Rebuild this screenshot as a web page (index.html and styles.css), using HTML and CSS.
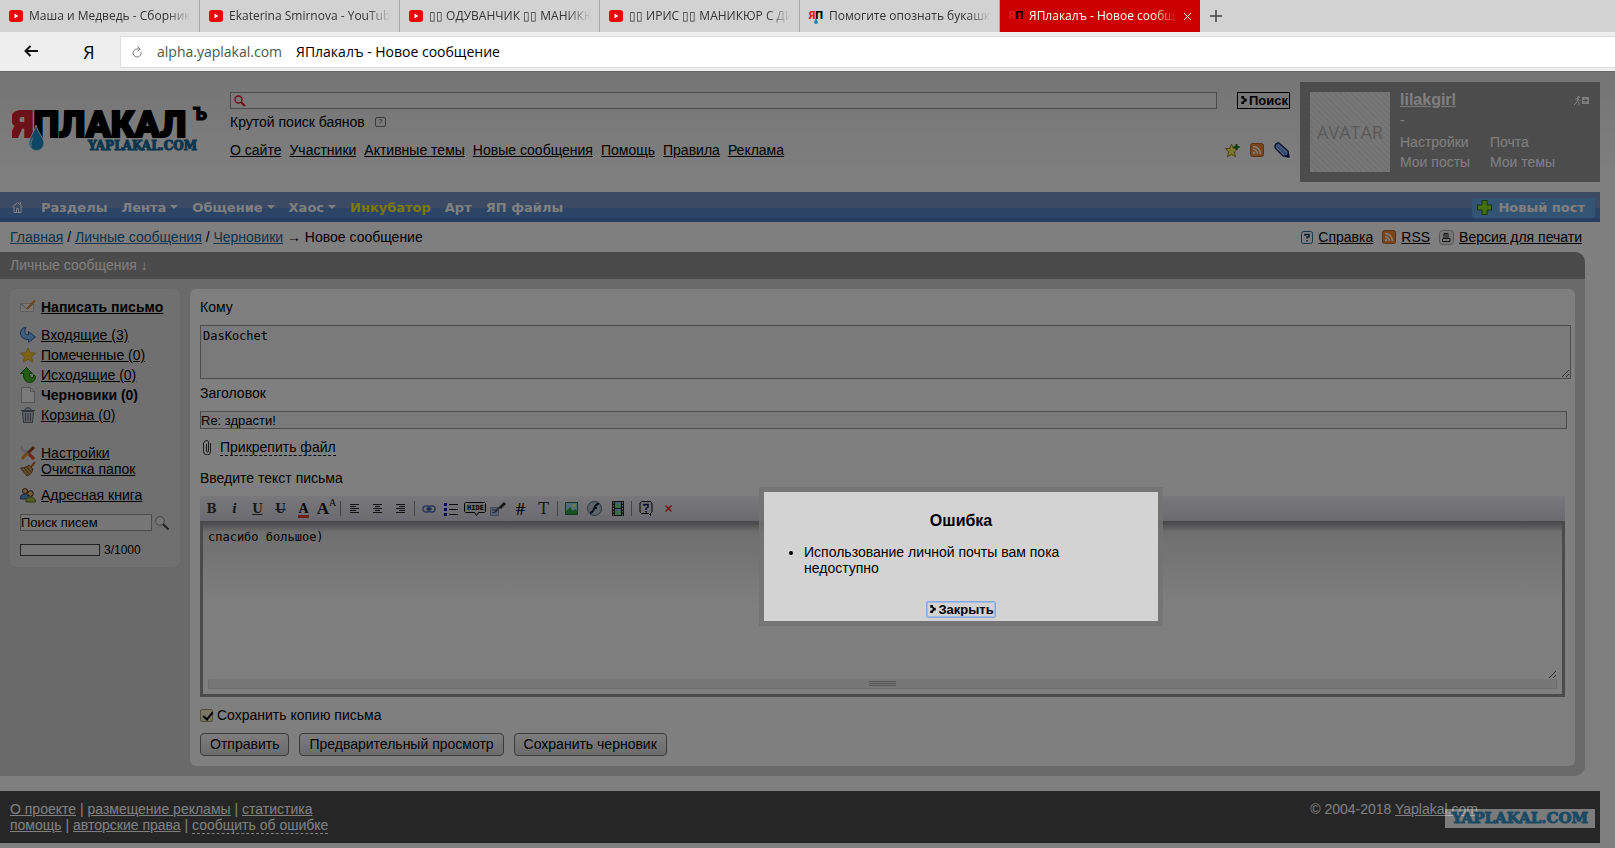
FILE: index.html
```html
<!DOCTYPE html>
<html lang="ru">
<head>
    <meta charset="UTF-8">
    <meta name="viewport" content="width=device-width, initial-scale=1.0">
    <title>ЯПлакалъ - Новое сообщение</title>
    <link rel="stylesheet" href="styles.css">
</head>
<body>
    <svg class="sprite" width="0" height="0" aria-hidden="true">
        <symbol id="rss" viewBox="0 0 14 14">
            <rect x=".5" y=".5" width="13" height="13" rx="2" fill="#f08a3c" stroke="#b86a28"/>
            <circle cx="4" cy="10" r="1.3" fill="#fff"/>
            <path d="M3 6.500a4.500 4.500 0 0 1 4.500 4.500M3 3.500a7.500 7.500 0 0 1 7.500 7.500" fill="none" stroke="#fff" stroke-width="1.500"/>
        </symbol>
        <symbol id="youtube" viewBox="0 0 14 12">
            <rect width="14" height="12" rx="3" fill="#f00000"/>
            <path d="M5.500 3.500v5l4-2.500z" fill="#fff"/>
        </symbol>
        <symbol id="marks" viewBox="0 0 6 10">
            <path d="M0 0h3v3H0zM2 2h2v2H2zM3 3h3v3H3zM2 5h2v2H2zM0 6h3v3H0z" fill="#000"/>
        </symbol>
    </svg>

    <!-- browser -->
    <nav class="tabs">
        <a class="tab" href="#"><svg width="14" height="12"><use href="#youtube"/></svg><span>Маша и Медведь - Сборник</span></a>
        <a class="tab" href="#"><svg width="14" height="12"><use href="#youtube"/></svg><span>Ekaterina Smirnova - YouTube</span></a>
        <a class="tab" href="#"><svg width="14" height="12"><use href="#youtube"/></svg><span>▯▯ ОДУВАНЧИК ▯▯ МАНИКЮР</span></a>
        <a class="tab" href="#"><svg width="14" height="12"><use href="#youtube"/></svg><span>▯▯ ИРИС ▯▯ МАНИКЮР С ДИЗ</span></a>
        <a class="tab" href="#">
            <span class="fav"><b>Я</b>П<svg width="4" height="6" viewBox="0 0 4 6"><path d="M2 0l2 4a2 2 0 0 1-4 0z" fill="#1b87c4"/></svg></span><span>Помогите опознать букашку</span>
        </a>
        <a class="tab active" href="#">
            <span class="fav"><b>Я</b>П</span><span>ЯПлакалъ - Новое сообщение</span>
            <svg class="close" width="9" height="9" viewBox="0 0 9 9"><path d="M1 1l7 7M8 1l-7 7" stroke="#fff"/></svg>
        </a>
        <button class="new-tab" aria-label="Новая вкладка"><svg width="12" height="12" viewBox="0 0 12 12"><path d="M6 0v12M0 6h12" stroke="#444" stroke-width="1.500"/></svg></button>
    </nav>
    <div class="toolbar">
        <button class="back" aria-label="Назад"><svg width="14" height="12" viewBox="0 0 14 12"><path d="M14 6H2M6.500 1L1.500 6l5 5" fill="none" stroke="#111" stroke-width="2"/></svg></button>
        <button class="ya">Я</button>
        <div class="address">
            <svg width="12" height="14" viewBox="0 0 12 14"><path d="M10 7A4 4 0 1 1 6 4h3M6.500 1.500L9 4 6.500 6.500" fill="none" stroke="#777"/></svg>
            <span class="host">alpha.yaplakal.com</span>
            <span>ЯПлакалъ - Новое сообщение</span>
        </div>
    </div>

    <div class="page">
        <header class="header">
            <a class="logo" href="#" aria-label="ЯПлакалъ">
                <svg width="200" height="50" viewBox="0 0 200 50">
                    <text class="logo-main" x="0" y="32"><tspan class="logo-ya">Я</tspan>ПЛАКАЛ</text>
                    <text class="logo-end" x="181" y="15">Ъ</text>
                    <text class="logo-sub" x="76" y="45">YAPLAKAL.COM</text>
                    <path d="M24 20c2 8 8 13 8 18a7.500 7.500 0 0 1-15 0c0-5 5-10 7-18z" fill="#1d8fcc" stroke="#e8e8e8"/>
                    <path d="M21 33c-3 4-3 7-1 9" fill="none" stroke="#7cc8ee" stroke-width="2"/>
                </svg>
            </a>
            <div class="header-main">
                <form class="search">
                    <div class="search-box">
                        <svg width="12" height="12" viewBox="0 0 12 12"><circle cx="4.500" cy="4.500" r="3.500" fill="none" stroke="#e01030" stroke-width="1.300"/><path d="M7 7l4 4" stroke="#e01030" stroke-width="2"/></svg>
                        <input type="text" aria-label="Поиск">
                    </div>
                    <button class="mark-btn" type="button"><svg width="6" height="9"><use href="#marks"/></svg>Поиск</button>
                </form>
                <p class="bayan">Крутой поиск баянов <span class="hint">?</span></p>
                <div class="links-row">
                    <nav class="top-links">
                        <a href="#">О сайте</a>
                        <a href="#">Участники</a>
                        <a href="#">Активные темы</a>
                        <a href="#">Новые сообщения</a>
                        <a href="#">Помощь</a>
                        <a href="#">Правила</a>
                        <a href="#">Реклама</a>
                    </nav>
                    <div class="top-icons">
                        <svg width="15" height="15" viewBox="0 0 15 15"><path d="M6.500 1l1.800 4.200 4.700.4-3.500 3.200 1 5-4-2.500-4 2.500 1-5L.500 5.600l4.500-.4z" fill="#f4ec5a" stroke="#9c8c20"/><path d="M11.500 1v6M8.500 4h6" stroke="#1c7a28" stroke-width="2"/></svg>
                        <svg width="14" height="14"><use href="#rss"/></svg>
                        <svg width="16" height="16" viewBox="0 0 16 16"><path d="M1 4c0-1.500 2-3.500 4-3l9 8 1 6-6-1-8-8z" fill="#6c9ce8" stroke="#101c50" stroke-width="1.300"/><path d="M4 2.500l9 8M2 5l8 8" stroke="#b8d4ff"/><path d="M11 15l4 .500-.500-4.500z" fill="#101c50"/></svg>
                    </div>
                </div>
            </div>
            <div class="user">
                <div class="avatar">AVATAR</div>
                <div class="user-info">
                    <a class="user-name" href="#">lilakgirl</a>
                    <span>-</span>
                    <div class="user-links">
                        <a href="#">Настройки</a>
                        <a href="#">Почта</a>
                        <a href="#">Мои посты</a>
                        <a href="#">Мои темы</a>
                    </div>
                </div>
                <svg class="exit" width="17" height="10" viewBox="0 0 17 10"><circle cx="5.500" cy="1.200" r="1.200" fill="#fff"/><path d="M2 3l3-.5-1 3.500-3 3M4.500 5.500L6 7v2.500M5 3.500l2.500 1" fill="none" stroke="#fff"/><path d="M9 1h7v7H9z" fill="#fff"/><path d="M10 4.500h4M12 2.500l2 2-2 2" fill="none" stroke="#888"/></svg>
            </div>
        </header>

        <nav class="menu">
            <a class="home" href="#" aria-label="Главная"><svg width="11" height="12" viewBox="0 0 11 12"><path d="M.500 6L5.500 1.500l5 4.500M2 5.500v6h7v-6M8.500 3.500V1M4.500 11V7.500h2V11" fill="none" stroke="#fff"/></svg></a>
            <a href="#">Разделы</a>
            <a class="drop" href="#">Лента</a>
            <a class="drop" href="#">Общение</a>
            <a class="drop" href="#">Хаос</a>
            <a class="hot" href="#">Инкубатор</a>
            <a href="#">Арт</a>
            <a href="#">ЯП файлы</a>
            <a class="new-post" href="#"><svg width="15" height="15" viewBox="0 0 15 15"><path d="M5 .500h5V5h4.500v5H10v4.500H5V10H.500V5H5z" fill="#8ce01c" stroke="#2c7010"/></svg>Новый пост</a>
        </nav>

        <div class="crumbs">
            <div>
                <a href="#">Главная</a> / <a href="#">Личные сообщения</a> / <a href="#">Черновики</a> → Новое сообщение
            </div>
            <div class="tools">
                <a href="#"><svg width="12" height="13" viewBox="0 0 12 13"><rect x=".5" y=".5" width="11" height="12" rx="2" fill="#f4f8fc" stroke="#2c6c94"/><path d="M4 5V3.500h4V6H6v1.500M6 9v1.500" fill="none" stroke="#104060" stroke-width="1.500"/></svg><span>Справка</span></a>
                <a href="#"><svg width="14" height="14"><use href="#rss"/></svg><span>RSS</span></a>
                <a href="#"><svg width="15" height="15" viewBox="0 0 15 15"><rect x=".5" y=".5" width="14" height="14" rx="3" fill="#eee" stroke="#aaa"/><path d="M5 8.500v-5h4v5M6 5h2M6 7h2M4 8.500h7v3H3.500v-2z" fill="none" stroke="#222"/></svg><span>Версия для печати</span></a>
            </div>
        </div>

        <main class="box">
            <div class="box-title">Личные сообщения ↓</div>
            <div class="box-body">
                <aside class="side">
                    <ul class="folders">
                        <li class="write"><svg width="16" height="16" viewBox="0 0 16 16"><path d="M.500 4.500h13v8H.500z" fill="#eee" stroke="#bbb"/><path d="M1 5l6 5 6-5" fill="none" stroke="#999"/><path d="M15 1.500L7 10" stroke="#d88c30" stroke-width="2"/></svg><a href="#">Написать письмо</a></li>
                        <li><svg width="16" height="16" viewBox="0 0 16 16"><path d="M6 .500C2 .500.500 3 .500 6c0 4 3 6.500 8 6.500v3l7-5.500-7-5.500V8C5 8 3.500 4 6 .500z" fill="#7cb8f8" stroke="#2c5ca4"/></svg><a href="#">Входящие (3)</a></li>
                        <li><svg width="16" height="16" viewBox="0 0 16 16"><path d="M8 1l2.200 4.700 5.300.5-4 3.600 1.200 5.200L8 12.300 3.300 15l1.200-5.200-4-3.600 5.300-.5z" fill="#f8c82c" stroke="#d09c20"/></svg><a href="#">Помеченные (0)</a></li>
                        <li><svg width="16" height="16" viewBox="0 0 16 16"><path d="M6.500.500l6 6H9.500c0 4 2 5 4 3.500V7.500l2 2c0 4-3 6-6 6s-6-2-6-9h-3z" fill="#44b820" stroke="#186c08"/></svg><a href="#">Исходящие (0)</a></li>
                        <li class="current"><svg width="16" height="16" viewBox="0 0 16 16"><path d="M1.500.500h9l4 4v11h-13z" fill="#f4f4f4" stroke="#aaa"/><path d="M10.500.500v4h4" fill="none" stroke="#aaa"/></svg><span>Черновики (0)</span></li>
                        <li><svg width="16" height="16" viewBox="0 0 16 16"><path d="M2.500 4.500h11l-1 11h-9zM1 3.500h14M5 3c0-3 6-3 6 0" fill="#c0c8d0" stroke="#606c7c"/><path d="M5.500 6v8M8 6v8M10.500 6v8" stroke="#606c7c"/></svg><a href="#">Корзина (0)</a></li>
                    </ul>
                    <ul class="settings">
                        <li><svg width="16" height="16" viewBox="0 0 16 16"><path d="M1.500 1v3l2 2 2-.500L13 14" fill="none" stroke="#bbb" stroke-width="2"/><path d="M14 2L8 8" stroke="#904020" stroke-width="3"/><path d="M7 8l-5 6" stroke="#e88828" stroke-width="3"/><path d="M9 9l5 5" stroke="#d84820" stroke-width="3"/></svg><a href="#">Настройки</a></li>
                        <li><svg width="16" height="16" viewBox="0 0 16 16"><path d="M15 1l-4 5" stroke="#c05020" stroke-width="2"/><path d="M9 4l4 4c-1 4-3 6-6 7L.500 7C4 7 7 6 9 4z" fill="#c89850" stroke="#80582c"/><path d="M4 7l5 6M7 6l4 5" stroke="#80582c"/></svg><a href="#">Очистка папок</a></li>
                        <li class="book"><svg width="16" height="16" viewBox="0 0 16 16"><path d="M.500 12c0-4 2-5 4-5s4 1 4 5z" fill="#5c94d0" stroke="#28507c"/><circle cx="5" cy="4" r="2.500" fill="#e8b880" stroke="#503010"/><path d="M6 15c0-4 2-5 4.500-5s5 1 5 5z" fill="#a8bc48" stroke="#586818"/><circle cx="10.500" cy="6.500" r="2.800" fill="#f0c080" stroke="#302010"/></svg><a href="#">Адресная книга</a></li>
                    </ul>
                    <form class="mail-search">
                        <input type="text" value="Поиск писем" aria-label="Поиск писем">
                        <svg width="14" height="14" viewBox="0 0 14 14"><circle cx="5" cy="5" r="4.300" fill="#eee" stroke="#888"/><path d="M8 8l5.500 5.500" stroke="#444" stroke-width="2"/></svg>
                    </form>
                    <div class="quota"><span class="quota-bar"></span>3/1000</div>
                </aside>

                <form class="compose">
                    <label for="to">Кому</label>
                    <textarea id="to" class="to">DasKochet</textarea>
                    <label for="subject">Заголовок</label>
                    <input id="subject" class="subject" type="text" value="Re: здрасти!">
                    <p class="attach"><svg width="9" height="15" viewBox="0 0 9 15"><path d="M3.500 4v7a1 1 0 0 0 2 0V3a2 2 0 0 0-4-1L.500 3v8.500a3 3 0 0 0 7 0V3" fill="none" stroke="#333"/></svg><a href="#">Прикрепить файл</a></p>
                    <label for="text">Введите текст письма</label>
                    <div class="editor-tools">
                        <button type="button" class="bold">B</button>
                        <button type="button" class="italic">i</button>
                        <button type="button" class="under">U</button>
                        <button type="button" class="strike">U</button>
                        <button type="button" class="color">A</button>
                        <button type="button" class="size">A<sup>A</sup></button>
                        <i class="sep"></i>
                        <button type="button" aria-label="Влево"><svg width="9" height="11" viewBox="0 0 9 11"><path d="M0 1.500h9M0 3.500h6M0 5.500h9M0 7.500h6M0 9.500h9" stroke="#222"/></svg></button>
                        <button type="button" aria-label="По центру"><svg width="9" height="11" viewBox="0 0 9 11"><path d="M0 1.500h9M2 3.500h5M0 5.500h9M2 7.500h5M0 9.500h9" stroke="#222"/></svg></button>
                        <button type="button" aria-label="Вправо"><svg width="9" height="11" viewBox="0 0 9 11"><path d="M0 1.500h9M3 3.500h6M0 5.500h9M3 7.500h6M0 9.500h9" stroke="#222"/></svg></button>
                        <i class="sep"></i>
                        <button type="button" aria-label="Ссылка"><svg width="14" height="8" viewBox="0 0 14 8"><rect x="1" y="1" width="7" height="6" rx="3" fill="none" stroke="#5474b8" stroke-width="1.500"/><rect x="6" y="1" width="7" height="6" rx="3" fill="none" stroke="#5474b8" stroke-width="1.500"/><path d="M4 4h6" stroke="#345494" stroke-width="1.500"/></svg></button>
                        <button type="button" aria-label="Список"><svg width="15" height="14" viewBox="0 0 15 14"><path d="M0 1h3v3H0zM0 6h3v3H0zM0 11h3v3H0z" fill="#1010a0"/><path d="M5 2.500h9M5 7.500h9M5 12.500h9" stroke="#111"/></svg></button>
                        <button type="button" class="hide" aria-label="Скрыть"><svg width="22" height="14" viewBox="0 0 22 14"><path d="M1.500.500h19l1 1v8l-1 1h-6l-2 3-2-3h-9l-1-1v-8z" fill="#ddd" stroke="#000"/><text x="3" y="8">HIDE</text></svg></button>
                        <button type="button" aria-label="Правка"><svg width="16" height="14" viewBox="0 0 16 14"><path d="M.500 5.500h8v8h-8z" fill="#b0bcd8" stroke="#8090b8"/><path d="M2 8h4M2 10.500h3" stroke="#4c64a0"/><path d="M15 1l-5 5" stroke="#333" stroke-width="3"/><path d="M10 5l-5 5" stroke="#555" stroke-width="2"/></svg></button>
                        <button type="button" class="sans">#</button>
                        <button type="button" class="serif">T</button>
                        <i class="sep"></i>
                        <button type="button" aria-label="Картинка"><svg width="13" height="13" viewBox="0 0 13 13"><path d="M.500.500h12v12H.500z" fill="#a0dcf4" stroke="#286c40"/><path d="M1 9l4-4 3 4 2-2 2 2v3H1z" fill="#30a040"/><circle cx="9" cy="3.500" r="1.500" fill="#fff480"/></svg></button>
                        <button type="button" aria-label="Флеш"><svg width="15" height="15" viewBox="0 0 15 15"><circle cx="7.500" cy="7.500" r="7" fill="#b8c8d0" stroke="#506878"/><path d="M12 3C8 2.500 8 6 7 8s-2 4-4 4M7 7h3" fill="none" stroke="#101c3c" stroke-width="2"/></svg></button>
                        <button type="button" aria-label="Видео"><svg width="12" height="15" viewBox="0 0 12 15"><path d="M0 0h12v15H0z" fill="#222"/><path d="M3 1h6v6H3zM3 8h6v6H3z" fill="#70d890"/><path d="M3 1h6v2H3zM3 8h6v2H3z" fill="#80c0e8"/><path d="M1.500 1v14M10.500 1v14" stroke="#ccc" stroke-dasharray="1.500 1.500"/></svg></button>
                        <i class="sep"></i>
                        <button type="button" aria-label="Помощь"><svg width="14" height="15" viewBox="0 0 14 15"><path d="M2.500.500h9l1.500 1.500v9l-1.500 1.500v2l-2-2h-7L1 11V2z" fill="#ddd" stroke="#000"/><path d="M5 5V3.500h4V6L7 7.500V9M7 10v1.500" fill="none" stroke="#10106c" stroke-width="1.500"/></svg></button>
                        <button type="button" aria-label="Очистить"><svg width="7" height="7" viewBox="0 0 7 7"><path d="M.500.500l6 6M6.500.500l-6 6" stroke="#e83018" stroke-width="1.500"/></svg></button>
                    </div>
                    <div class="editor">
                        <textarea id="text">спасибо большое)</textarea>
                        <div class="grip"><i></i></div>
                    </div>
                    <div class="keep">
                        <input type="checkbox" id="keep" checked>
                        <label for="keep">Сохранить копию письма</label>
                    </div>
                    <div class="actions">
                        <button type="button">Отправить</button>
                        <button type="button">Предварительный просмотр</button>
                        <button type="button">Сохранить черновик</button>
                    </div>
                </form>
            </div>
        </main>

        <footer class="footer">
            <div>
                <a href="#">О проекте</a> | <a href="#">размещение рекламы</a> | <a href="#">статистика</a><br>
                <a href="#">помощь</a> | <a href="#">авторские права</a> | <a class="dashed" href="#">сообщить об ошибке</a>
            </div>
            <div class="copy">© 2004-2018 <a href="#">Yaplakal.com</a></div>
        </footer>

        <div class="overlay"></div>
        <div class="modal" role="dialog" aria-labelledby="err">
            <h2 id="err">Ошибка</h2>
            <ul>
                <li>Использование личной почты вам пока недоступно</li>
            </ul>
            <button class="mark-btn focused" type="button"><svg width="6" height="9"><use href="#marks"/></svg>Закрыть</button>
        </div>
        <div class="watermark">YAPLAKAL.COM</div>
    </div>
</body>
</html>
```

FILE: styles.css
```css
* { margin: 0; padding: 0; box-sizing: border-box; }
body {
    min-height: 100vh;
    display: flex;
    flex-direction: column;
    font: 14px/16px "Liberation Sans", Arial, sans-serif;
    color: #000;
}
a { color: inherit; }
ul { list-style: none; }
svg { flex: none; }
button { font: inherit; color: inherit; border: 0; background: none; }
input, textarea { color: inherit; }
.sprite { position: absolute; }

/* browser */
.tabs {
    display: flex;
    height: 32px;
    background: #d2d2d2;
    font: 12px/18px "Open Sans", sans-serif;
}
.tab {
    position: relative;
    flex: 0 1 200px;
    min-width: 0;
    display: flex;
    align-items: center;
    gap: 6px;
    padding: 0 8px 0 9px;
    border-right: 1px solid #a8a8a8;
    color: #333;
    text-decoration: none;
    white-space: nowrap;
}
.tab > span:not(.fav) {
    flex: 1;
    overflow: hidden;
    -webkit-mask-image: linear-gradient(to left, transparent, #000 24px);
    mask-image: linear-gradient(to left, transparent, #000 24px);
}
.fav {
    position: relative;
    font: 900 11px/14px Roboto, sans-serif;
    color: #000;
}
.fav b { color: #e01c24; font-weight: 900; }
.fav svg { position: absolute; left: 5px; top: 9px; }
.tab.active { background: #cc0000; color: #fff; border: 0; }
.new-tab { width: 32px; display: flex; align-items: center; justify-content: center; }
.toolbar {
    display: flex;
    align-items: center;
    height: 40px;
    background: #eee;
    border-bottom: 1px solid #666;
}
.back { width: 62px; }
.ya { font: 18px/24px "Open Sans", sans-serif; width: 54px; }
.address {
    flex: 1;
    display: flex;
    align-items: center;
    gap: 14px;
    height: 32px;
    margin-left: 4px;
    padding-left: 10px;
    background: #fff;
    border: 1px solid #ddd;
    border-right: 0;
    font: 14px/20px "Open Sans", sans-serif;
}
.host { color: #4a5a4a; }

/* page */
.page {
    position: relative;
    flex: 1;
    padding-right: 15px;
    background: linear-gradient(#eaeaea, #fff 110px);
}
.header {
    display: flex;
    height: 120px;
    padding-top: 10px;
}
.logo { width: 230px; padding: 23px 0 0 12px; }
.logo-main { font: 900 37px Roboto, sans-serif; stroke: #000; stroke-width: 2px; }
.logo-ya { fill: #d8232e; stroke: #d8232e; }
.logo-end { font: 900 18px Roboto, sans-serif; stroke: #000; }
.logo-sub { font: bold 12px "DejaVu Serif", serif; fill: #106c9c; stroke: #106c9c; }
.header-main { flex: 1; padding-top: 10px; }
.search { display: flex; gap: 20px; }
.search-box {
    flex: 1;
    display: flex;
    align-items: center;
    height: 17px;
    padding-left: 3px;
    background: #f4f4f4;
    border: 1px solid #999;
}
.search-box input { flex: 1; height: 15px; border: 0; background: none; }
.mark-btn {
    display: inline-flex;
    align-items: center;
    gap: 2px;
    height: 17px;
    padding: 0 1px 0 3px;
    font: bold 13px/15px "Liberation Sans", Arial, sans-serif;
    border: 1px solid #000;
}
.bayan { display: flex; align-items: center; margin-top: 5px; }
.hint {
    width: 11px;
    height: 10px;
    margin-left: 10px;
    border: 1px solid #777;
    border-radius: 2px;
    font-size: 8px;
    line-height: 8px;
    text-align: center;
    color: #555;
}
.links-row { display: flex; justify-content: space-between; margin-top: 12px; }
.top-links { display: flex; gap: 8px; }
.top-icons { display: flex; align-items: center; gap: 10px; }
.user {
    display: flex;
    width: 300px;
    height: 100px;
    margin-left: 10px;
    padding: 10px;
    background: #999;
    color: #fff;
}
.avatar {
    width: 80px;
    height: 80px;
    margin-right: 10px;
    background: repeating-linear-gradient(45deg, #e4e4e4 0 2px, #eee 2px 4px);
    color: #b4b4b4;
    font: 18px/80px "Open Sans", sans-serif;
    text-align: center;
}
.user-info { flex: 1; }
.user-info > span { display: block; line-height: 20px; }
.user-name { display: block; font-weight: bold; font-size: 16px; line-height: 16px; margin-bottom: 2px; }
.user-links { display: grid; grid-template-columns: 90px 1fr; line-height: 20px; margin-top: 2px; }
.user-links a { text-decoration: none; }
.exit { margin-top: 4px; }

.menu {
    display: flex;
    align-items: center;
    gap: 14px;
    height: 30px;
    padding: 1px 5px 0 12px;
    background: linear-gradient(#7894c8 0 16px, #5888cc 16px 26px, #507cc0 26px);
    font: bold 13px/20px "DejaVu Sans", Verdana, sans-serif;
    color: #fff;
}
.menu a { text-decoration: none; }
.home { margin-right: 4px; height: 14px; line-height: 14px; }
.drop::after {
    content: "";
    display: inline-block;
    margin: 0 0 3px 4px;
    border: 4px solid transparent;
    border-top-color: #fff;
    border-bottom: 0;
}
.menu .hot { color: #f8f000; }
.new-post {
    display: flex;
    align-items: center;
    gap: 6px;
    height: 20px;
    margin-left: auto;
    padding: 0 10px 0 5px;
    background: #68a8e8;
    border-radius: 2px;
}

.crumbs {
    display: flex;
    justify-content: space-between;
    align-items: center;
    height: 30px;
    padding: 0 18px 0 10px;
}
.crumbs > div:first-child a { color: #10689c; }
.tools { display: flex; gap: 9px; }
.tools a { display: flex; align-items: center; gap: 5px; text-decoration: none; }
.tools span { text-decoration: underline; }

.box {
    margin-right: 15px;
    background: #d4d4d4;
    border-radius: 0 10px 10px 0;
}
.box-title {
    padding: 5px 10px 6px;
    background: #979797;
    border-radius: 0 10px 0 0;
    color: #fff;
}
.box-body {
    display: flex;
    align-items: flex-start;
    gap: 10px;
    padding: 10px;
}
.side {
    width: 170px;
    padding: 8px 10px 9px;
    background: #e0e0e0;
    border-radius: 6px;
}
.side li { display: flex; align-items: center; gap: 5px; height: 20px; }
.side .write { font-weight: bold; margin-bottom: 8px; }
.side .current { font-weight: bold; }
.settings { margin-top: 20px; }
.side .settings li { height: 16px; }
.side .settings .book { margin-top: 10px; }
.mail-search { display: flex; align-items: center; gap: 3px; margin-top: 11px; }
.mail-search input {
    width: 132px;
    height: 17px;
    background: #eee;
    border: 1px solid #999;
    font: 13px/15px "Liberation Sans", Arial, sans-serif;
}
.quota { display: flex; align-items: center; gap: 4px; margin-top: 11px; font-size: 12px; }
.quota-bar { width: 80px; height: 12px; background: #eee; border: 1px solid #444; }

.compose {
    flex: 1;
    min-width: 0;
    padding: 10px;
    background: #fff;
    border-radius: 6px;
}
.compose > label { display: block; }
.compose textarea {
    display: block;
    font: 12px/14px "DejaVu Sans Mono", monospace;
}
.compose .to {
    width: calc(100% + 6px);
    height: 54px;
    margin: 10px 0 6px;
    padding: 3px 2px;
    background: #f4f4f4;
    border: 1px solid #999;
}
.subject {
    display: block;
    width: calc(100% + 2px);
    height: 18px;
    margin-top: 10px;
    background: #f4f4f4;
    border: 1px solid #999;
    font: 13px/16px "Liberation Sans", Arial, sans-serif;
}
.attach { display: flex; align-items: center; gap: 8px; margin: 10px 0 14px; padding-left: 3px; }
.attach a, .dashed { text-decoration: none; border-bottom: 1px dashed; }
.editor-tools {
    display: flex;
    align-items: center;
    height: 25px;
    margin-top: 10px;
    background: linear-gradient(#f2f2f8, #d4d4e0);
}
.editor-tools button {
    display: flex;
    align-items: center;
    justify-content: center;
    width: 23px;
    height: 20px;
    font: bold 12px/16px "DejaVu Serif", serif;
    color: #333;
}
.editor-tools .italic { font-style: italic; }
.editor-tools .under { text-decoration: underline; }
.editor-tools .strike { text-decoration: line-through; }
.editor-tools .color {
    font: bold 14px/12px "Liberation Serif", serif;
    color: #111;
    background: linear-gradient(#d84020, #d84020) center 16px / 11px 3px no-repeat;
}
.editor-tools .size { font: bold 17px/16px "Liberation Serif", serif; color: #111; }
.editor-tools .size sup { font-size: 10px; font-weight: normal; line-height: 8px; align-self: flex-start; }
.editor-tools .sans { font: 16px/16px "Open Sans", sans-serif; color: #000; }
.editor-tools .serif { font: 16px/16px "DejaVu Serif", serif; }
.hide text { font: bold 7px "DejaVu Sans Mono", monospace; fill: #000; }
.sep { width: 1px; height: 15px; margin: 0 2px; background: #888; }
.editor {
    height: 176px;
    padding: 5px;
    border: 3px solid #979797;
    border-top-width: 2px;
    background: linear-gradient(#989898, #dedede 9px, #e4e4e4 20px, #fff 85px);
}
.editor textarea {
    width: 100%;
    height: 151px;
    padding: 2px 0;
    border: 0;
    outline: 0;
    background: none;
}
.grip {
    display: flex;
    align-items: center;
    justify-content: center;
    height: 10px;
    background: #eee;
    border: 1px solid #ddd;
    border-top: 0;
}
.grip i {
    width: 27px;
    height: 5px;
    border: 1px solid #aaa;
    border-width: 1px 0;
    background: linear-gradient(#eee 1px, #aaa 1px 2px, #eee 2px);
}
.keep { display: flex; align-items: center; gap: 4px; margin-top: 10px; }
.keep input {
    appearance: none;
    width: 13px;
    height: 13px;
    border: 1px solid #a09870;
    border-radius: 2px;
    background: #f4ecc8;
}
.keep input:checked::before {
    content: "";
    display: block;
    width: 4px;
    height: 8px;
    margin: 0 0 0 4px;
    border: solid #000;
    border-width: 0 2px 2px 0;
    transform: rotate(40deg);
}
.actions { display: flex; gap: 10px; margin-top: 10px; }
.actions button {
    height: 23px;
    padding: 0 9px 1px;
    border: 1px solid #777;
    border-radius: 4px;
    background: linear-gradient(#fafafa, #d8d8d8);
}

.footer {
    display: flex;
    justify-content: space-between;
    height: 52px;
    margin-top: 15px;
    padding: 10px;
    background: #4c4c4c;
    color: #fff;
}
.copy { padding-right: 112px; }

.overlay {
    position: absolute;
    inset: 0;
    background: rgba(0, 0, 0, 0.5);
}
.modal {
    position: absolute;
    left: 47%;
    top: 415px;
    width: 404px;
    padding: 20px 20px 3px;
    background: #d3d3d3;
    background-clip: padding-box;
    border: 5px solid rgba(115, 115, 115, 0.8);
    text-align: center;
}
.modal h2 { font-size: 16px; line-height: 18px; margin-bottom: 14px; }
.modal ul { list-style: disc; width: 300px; padding-left: 20px; text-align: left; margin-bottom: 25px; }
.modal .mark-btn { vertical-align: top; border: 1px solid #86a8dc; border-radius: 2px; outline: 1px solid #a4bce4; outline-offset: -2px; }
.watermark {
    position: absolute;
    right: 20px;
    bottom: 20px;
    width: 150px;
    background: rgba(255, 255, 255, 0.4);
    color: #1c4a64;
    font: bold 15px/19px "DejaVu Serif", serif;
    -webkit-text-stroke: 1px #1c4a64;
    text-align: center;
}
```
